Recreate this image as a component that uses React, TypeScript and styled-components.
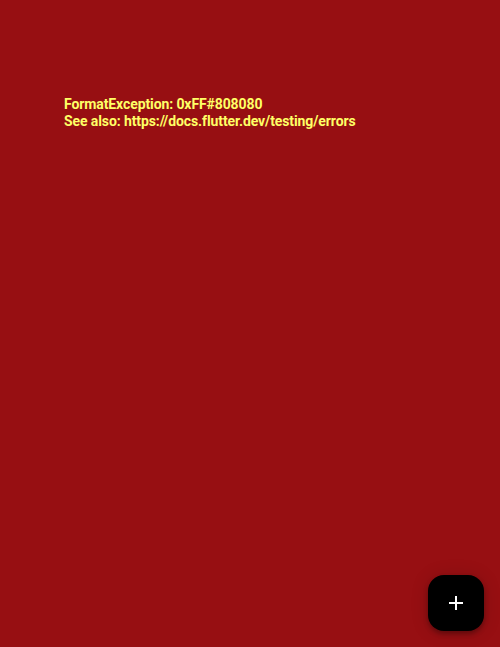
import React from "react";
import styled, { createGlobalStyle } from "styled-components";

const Global = createGlobalStyle`
  html, body { margin: 0; padding: 0; }
  body { background: #970f12; font-family: Roboto, "Noto Sans", sans-serif; }
`;

const Page = styled.div`
  position: relative;
  width: 500px;
  height: 647px;
  background: #970f12;
  overflow: hidden;
`;

const ErrorBox = styled.div`
  padding: 96px 64px 0 64px;
`;

const ErrorText = styled.p`
  margin: 0;
  color: #ffff66;
  font-family: Roboto, sans-serif;
  font-size: 14px;
  font-weight: 700;
  line-height: 16.5px;
  letter-spacing: -0.1px;
`;

const Fab = styled.button`
  position: absolute;
  right: 16px;
  bottom: 16px;
  width: 56px;
  height: 56px;
  border: none;
  border-radius: 16px;
  background: #000;
  box-shadow: 0 3px 5px rgba(0, 0, 0, 0.3), 0 1px 18px rgba(0, 0, 0, 0.15);
  display: flex;
  align-items: center;
  justify-content: center;
  padding: 0;
  cursor: pointer;
`;

export default function App() {
  return (
    <Page>
      <Global />
      <ErrorBox>
        <ErrorText>FormatException: 0xFF#808080</ErrorText>
        <ErrorText>See also: https://docs.flutter.dev/testing/errors</ErrorText>
      </ErrorBox>
      <Fab aria-label="add">
        <svg width="24" height="24" viewBox="0 0 24 24">
          <path d="M19 13h-6v6h-2v-6H5v-2h6V5h2v6h6v2z" fill="#fff" />
        </svg>
      </Fab>
    </Page>
  );
}
